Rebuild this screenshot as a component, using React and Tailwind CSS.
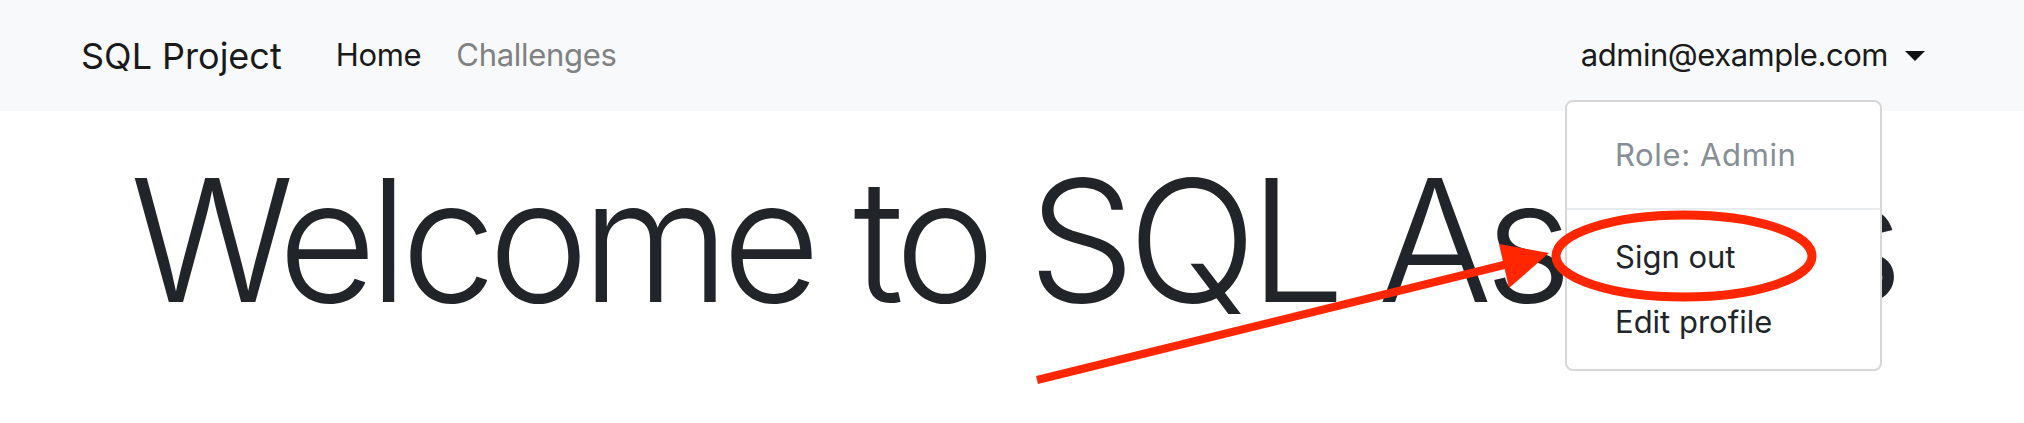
import React from "react";

const font = { fontFamily: '"Inter", "Liberation Sans", sans-serif' };

function Caret() {
  return (
    <svg width="20" height="10" viewBox="0 0 20 10" className="ml-[17px]">
      <path d="M0 0 L20 0 L10 10 Z" fill="#111" />
    </svg>
  );
}

function NavBar() {
  return (
    <nav className="h-[111px] bg-[#f8f9fa] flex items-center pl-[81px] pr-[99px]">
      <span className="text-[36px] text-[#1a1a1a] mr-[54px]">SQL Project</span>
      <a className="text-[31px] tracking-[-0.01em] text-[#1a1a1a] mr-[35px]">Home</a>
      <a className="text-[31px] tracking-[-0.01em] text-[#808182]">Challenges</a>
      <div className="ml-auto flex items-center">
        <span className="text-[31px] tracking-[-0.015em] text-[#1a1a1a]">admin@example.com</span>
        <Caret />
      </div>
    </nav>
  );
}

function DropdownMenu() {
  return (
    <div className="absolute left-[1565px] top-[100px] w-[317px] h-[271px] bg-white border-2 border-[#d7d7d7] rounded-[8px] flex flex-col">
      <div className="h-[106px] flex items-center pl-[48px] text-[31px] tracking-[0.02em] text-[#868e96]">
        Role: Admin
      </div>
      <div className="h-[2px] bg-[#e9ecef]" />
      <div className="pt-[15px] flex flex-col">
        <a className="h-[65px] flex items-center pl-[48px] text-[31px] text-[#212529]">Sign out</a>
        <a className="h-[65px] flex items-center pl-[48px] text-[31px] text-[#212529]">Edit profile</a>
      </div>
    </div>
  );
}

function Annotation() {
  return (
    <svg className="absolute inset-0 pointer-events-none" width="2024" height="423" viewBox="0 0 2024 423">
      <line x1="1037" y1="380" x2="1508" y2="264" stroke="#ff2600" strokeWidth="8" />
      <polygon points="1549,253 1499,244 1509,288" fill="#ff2600" />
      <ellipse cx="1684" cy="256" rx="128" ry="41" fill="none" stroke="#ff2600" strokeWidth="9" />
    </svg>
  );
}

export default function App() {
  return (
    <div className="relative w-[2024px] h-[423px] overflow-hidden bg-white" style={font}>
      <NavBar />
      <h1 className="pl-[130px] mt-[44px] text-[170px] leading-none font-light text-[#212529] whitespace-nowrap tracking-[-0.045em]">
        Welcome to SQL Assess
      </h1>
      <DropdownMenu />
      <Annotation />
    </div>
  );
}
